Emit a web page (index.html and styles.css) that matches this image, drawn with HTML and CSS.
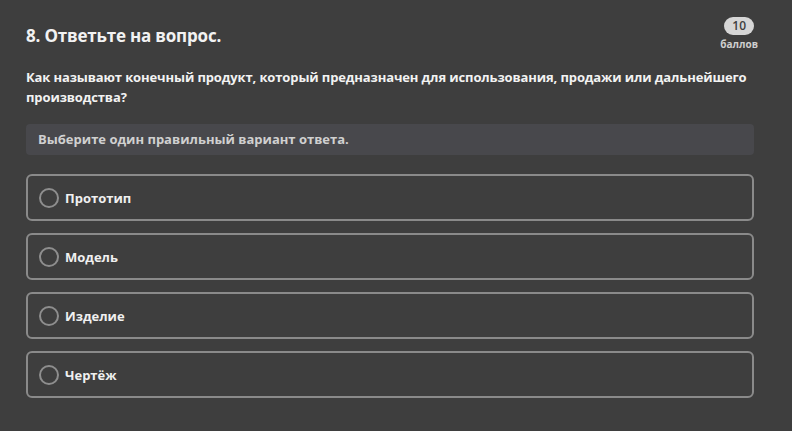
FILE: index.html
```html
<!DOCTYPE html>
<html lang="ru">
<head>
    <meta charset="UTF-8">
    <meta name="viewport" content="width=device-width, initial-scale=1.0">
    <title>Вопрос 8</title>
    <link rel="stylesheet" href="styles.css">
</head>
<body>
    <div class="question">
        <!-- Header with score badge -->
        <div class="question-head">
            <h2 class="question-title">8. Ответьте на вопрос.</h2>
            <div class="score">
                <span class="score-value">10</span>
                <span class="score-label">баллов</span>
            </div>
        </div>

        <p class="question-text">Как называют конечный продукт, который предназначен для использования, продажи или дальнейшего производства?</p>

        <div class="hint">Выберите один правильный вариант ответа.</div>

        <!-- Answer options -->
        <div class="options">
            <label class="option"><span class="radio"></span>Прототип</label>
            <label class="option"><span class="radio"></span>Модель</label>
            <label class="option"><span class="radio"></span>Изделие</label>
            <label class="option"><span class="radio"></span>Чертёж</label>
        </div>
    </div>
</body>
</html>
```

FILE: styles.css
```css
body { margin: 0; background-color: #3e3e3e; font-family: "Open Sans", "Noto Sans", sans-serif; color: #f2f2f2; }
.question { padding: 16px 38px 0 26px; }
.question-head { display: flex; justify-content: space-between; align-items: flex-start; }
.question-title { margin: 8px 0 0; font-size: 17px; font-weight: 700; letter-spacing: -0.2px; }
.score { display: flex; flex-direction: column; align-items: center; margin-right: -4px; }
.score-value { background-color: #d6d6d6; color: #3e3e3e; font-size: 12px; font-weight: 600; line-height: 18px; padding: 0 8px; border-radius: 9px; margin-top: 1px; }
.score-label { font-size: 10px; font-weight: 700; color: #cfcfcf; line-height: 14px; margin-top: 2px; }
.question-text { margin: 16px -4px 0 0; font-size: 13px; font-weight: 700; line-height: 20px; letter-spacing: -0.12px; }
.hint { margin-top: 17px; background-color: #48484c; border-radius: 4px; padding: 6px 12px; font-size: 13px; font-weight: 700; color: #d0d0d0; line-height: 19px; }
.options { display: flex; flex-direction: column; gap: 12px; margin-top: 19px; }
.option { display: flex; align-items: center; height: 43px; border: 2px solid #8a8a8a; border-radius: 6px; padding: 0 11px; font-size: 13px; font-weight: 700; color: #f0f0f0; }
.radio { width: 16px; height: 16px; border: 2px solid #8e8e8e; border-radius: 50%; margin-right: 6px; }
```
